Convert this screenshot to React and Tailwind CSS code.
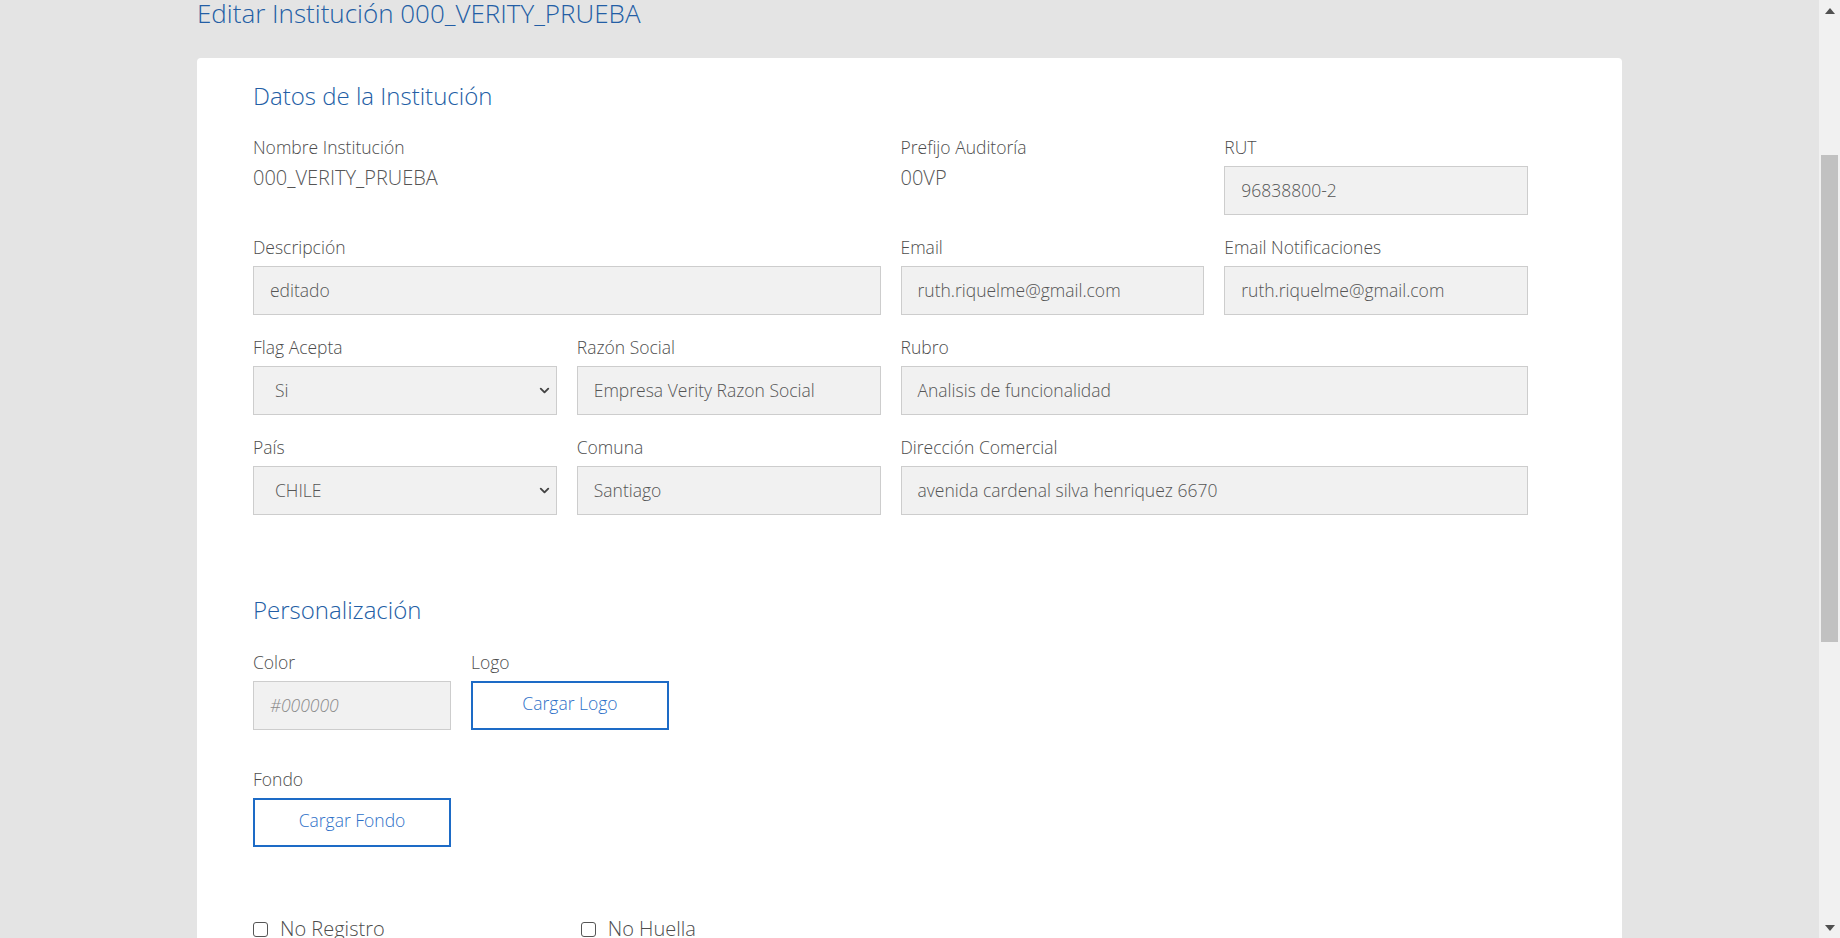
import { ChevronDown } from 'lucide-react'

const rows = [
  [
    { label: 'Nombre Institución', text: '000_VERITY_PRUEBA', span: 2 },
    { label: 'Prefijo Auditoría', text: '00VP' },
    { label: 'RUT', value: '96838800-2' },
  ],
  [
    { label: 'Descripción', value: 'editado', span: 2 },
    { label: 'Email', value: 'ruth.riquelme@gmail.com' },
    { label: 'Email Notificaciones', value: 'ruth.riquelme@gmail.com' },
  ],
  [
    { label: 'Flag Acepta', value: 'Si', select: true },
    { label: 'Razón Social', value: 'Empresa Verity Razon Social' },
    { label: 'Rubro', value: 'Analisis de funcionalidad', span: 2 },
  ],
  [
    { label: 'País', value: 'CHILE', select: true },
    { label: 'Comuna', value: 'Santiago' },
    { label: 'Dirección Comercial', value: 'avenida cardenal silva henriquez 6670', span: 2 },
  ],
]

function Label({ children }) {
  return <div className="h-6 mb-[7px] text-[17.5px] leading-6 font-light text-[#4d4d4d]">{children}</div>
}

function Field({ label, value, text, select, span }) {
  return (
    <div className={span === 2 ? 'col-span-2' : ''}>
      <Label>{label}</Label>
      {text ? (
        <div className="-mt-[1px] text-[20px] leading-[26px] font-light text-[#555]">{text}</div>
      ) : (
        <div
          className={`h-[49px] flex items-center justify-between bg-[#f1f1f1] border border-[#cdcdcd] text-[17.5px] font-light text-[#555] ${
            select ? 'pl-[21px] pr-[4px]' : 'pl-[16px]'
          }`}
        >
          <span>{value}</span>
          {select && <ChevronDown className="w-[15px] h-[15px] text-[#444]" strokeWidth={3} />}
        </div>
      )}
    </div>
  )
}

function UploadButton({ children }) {
  return (
    <button className="w-[198px] h-[49px] flex items-center justify-center pb-[5px] bg-white border-2 border-[#1d6bc6] text-[17.5px] font-light text-[#2d70c8]">
      {children}
    </button>
  )
}

function Checkbox({ children, className = '' }) {
  return (
    <label className={`flex items-center gap-[12px] text-[20px] leading-6 font-light text-[#4d4d4d] ${className}`}>
      <span className="w-[15px] h-[15px] border border-[#555] rounded-[3px] bg-white shrink-0" />
      {children}
    </label>
  )
}

function Scrollbar() {
  return (
    <div className="w-[21px] h-full bg-[#f1f1f1] flex flex-col items-center shrink-0">
      <div className="h-[21px] flex items-center justify-center">
        <svg width="10" height="6" viewBox="0 0 10 6"><path d="M0 6 L5 0 L10 6 Z" fill="#505050" /></svg>
      </div>
      <div className="mt-[134px] w-[17px] h-[487px] bg-[#c1c1c1]" />
      <div className="flex-1" />
      <div className="h-[21px] flex items-center justify-center">
        <svg width="10" height="6" viewBox="0 0 10 6"><path d="M0 0 L10 0 L5 6 Z" fill="#505050" /></svg>
      </div>
    </div>
  )
}

export default function App() {
  return (
    <div className="flex h-screen overflow-hidden bg-[#e4e4e4] font-['Open_Sans',sans-serif]">
      <div className="flex-1 overflow-hidden">
        <div className="ml-[197px] w-[1425px]">
          <h1 className="text-[26px] leading-[26px] font-light text-[#235ea5]">Editar Institución 000_VERITY_PRUEBA</h1>

          <div className="mt-[32px] bg-white rounded-t-[4px] pl-[56px] pt-[24px] pb-[80px]">
            <h2 className="h-7 text-[24px] leading-7 font-light text-[#235ea5]">Datos de la Institución</h2>

            <div className="mt-[25px] w-[1275px] flex flex-col gap-y-[20px]">
              {rows.map((row, i) => (
                <div key={i} className="grid grid-cols-4 gap-x-[20px]">
                  {row.map((f) => (
                    <Field key={f.label} {...f} />
                  ))}
                </div>
              ))}
            </div>

            <h2 className="mt-[81px] h-7 text-[24px] leading-7 font-light text-[#235ea5]">Personalización</h2>

            <div className="mt-[26px] flex gap-x-[20px]">
              <div className="w-[198px]">
                <Label>Color</Label>
                <div className="h-[49px] flex items-center pl-[16px] bg-[#f1f1f1] border border-[#cdcdcd] text-[17.5px] font-light italic text-[#8a8a8a]">
                  #000000
                </div>
              </div>
              <div className="w-[198px]">
                <Label>Logo</Label>
                <UploadButton>Cargar Logo</UploadButton>
              </div>
            </div>

            <div className="mt-[37px] w-[198px]">
              <Label>Fondo</Label>
              <UploadButton>Cargar Fondo</UploadButton>
            </div>

            <div className="mt-[70px] w-[1275px] grid grid-cols-4 gap-x-[20px]">
              <Checkbox>No Registro</Checkbox>
              <Checkbox className="ml-[4px]">No Huella</Checkbox>
            </div>
          </div>
        </div>
      </div>
      <Scrollbar />
    </div>
  )
}
